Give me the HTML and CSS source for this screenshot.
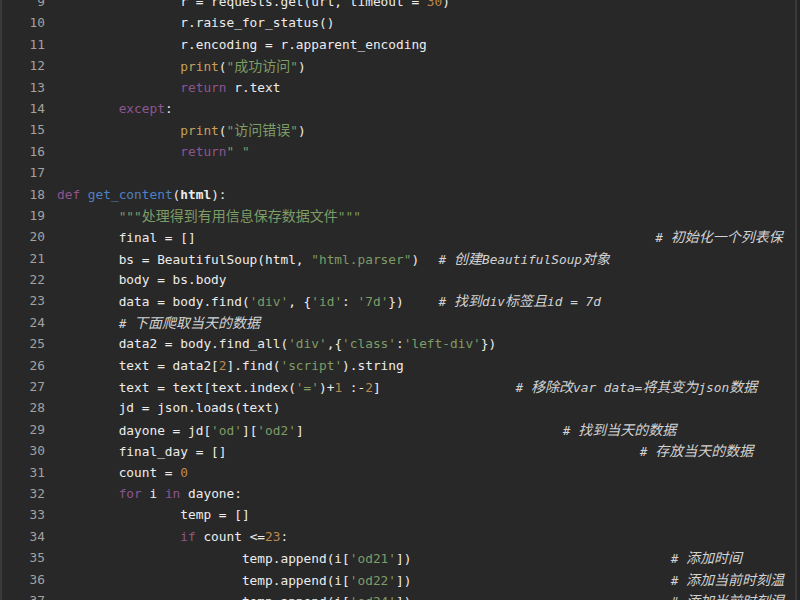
FILE: index.html
```html
<!DOCTYPE html>
<html lang="zh-CN">
<head>
<meta charset="utf-8">
<title>code</title>
<link rel="stylesheet" href="styles.css">
</head>
<body>
<div class="editor">
  <div class="lines">
    <div class="row"><span class="num">9</span><span class="code">                r = requests.get(url, timeout = <span class="n">30</span>)</span></div>
    <div class="row"><span class="num">10</span><span class="code">                r.raise_for_status()</span></div>
    <div class="row"><span class="num">11</span><span class="code">                r.encoding = r.apparent_encoding</span></div>
    <div class="row"><span class="num">12</span><span class="code">                <span class="f">print</span>(<span class="s">"<span class="zh">成功访问</span>"</span>)</span></div>
    <div class="row"><span class="num">13</span><span class="code">                <span class="k">return</span> r.text</span></div>
    <div class="row"><span class="num">14</span><span class="code">        <span class="k">except</span>:</span></div>
    <div class="row"><span class="num">15</span><span class="code">                <span class="f">print</span>(<span class="s">"<span class="zh">访问错误</span>"</span>)</span></div>
    <div class="row"><span class="num">16</span><span class="code">                <span class="k">return</span><span class="s">" "</span></span></div>
    <div class="row"><span class="num">17</span><span class="code"></span></div>
    <div class="row"><span class="num">18</span><span class="code"><span class="k">def</span> <span class="fn">get_content</span>(<span class="b">html</span>):</span></div>
    <div class="row"><span class="num">19</span><span class="code">        <span class="s">"""<span class="zh">处理得到有用信息保存数据文件</span>"""</span></span></div>
    <div class="row"><span class="num">20</span><span class="code"><span class="to77">        final = []</span><span class="c"># <span class="zh">初始化一个列表保</span></span></span></div>
    <div class="row"><span class="num">21</span><span class="code"><span class="to49">        bs = BeautifulSoup(html, <span class="s">"html.parser"</span>)</span><span class="c"># <span class="zh">创建</span>BeautifulSoup<span class="zh">对象</span></span></span></div>
    <div class="row"><span class="num">22</span><span class="code">        body = bs.body</span></div>
    <div class="row"><span class="num">23</span><span class="code"><span class="to49">        data = body.find(<span class="s">'div'</span>, {<span class="s">'id'</span>: <span class="s">'7d'</span>})</span><span class="c"># <span class="zh">找到</span>div<span class="zh">标签且</span>id = 7d</span></span></div>
    <div class="row"><span class="num">24</span><span class="code">        <span class="c"># <span class="zh">下面爬取当天的数据</span></span></span></div>
    <div class="row"><span class="num">25</span><span class="code">        data2 = body.find_all(<span class="s">'div'</span>,{<span class="s">'class'</span>:<span class="s">'left-div'</span>})</span></div>
    <div class="row"><span class="num">26</span><span class="code">        text = data2[<span class="n">2</span>].find(<span class="s">'script'</span>).string</span></div>
    <div class="row"><span class="num">27</span><span class="code"><span class="to59">        text = text[text.index(<span class="s">'='</span>)+<span class="n">1</span> :-<span class="n">2</span>]</span><span class="c"># <span class="zh">移除改</span>var data=<span class="zh">将其变为</span>json<span class="zh">数据</span></span></span></div>
    <div class="row"><span class="num">28</span><span class="code">        jd = json.loads(text)</span></div>
    <div class="row"><span class="num">29</span><span class="code"><span class="to65">        dayone = jd[<span class="s">'od'</span>][<span class="s">'od2'</span>]</span><span class="c"># <span class="zh">找到当天的数据</span></span></span></div>
    <div class="row"><span class="num">30</span><span class="code"><span class="to75">        final_day = []</span><span class="c"># <span class="zh">存放当天的数据</span></span></span></div>
    <div class="row"><span class="num">31</span><span class="code">        count = <span class="n">0</span></span></div>
    <div class="row"><span class="num">32</span><span class="code">        <span class="k">for</span> i <span class="k">in</span> dayone:</span></div>
    <div class="row"><span class="num">33</span><span class="code">                temp = []</span></div>
    <div class="row"><span class="num">34</span><span class="code">                <span class="k">if</span> count &lt;=<span class="n">23</span>:</span></div>
    <div class="row"><span class="num">35</span><span class="code"><span class="to79">                        temp.append(i[<span class="s">'od21'</span>])</span><span class="c"># <span class="zh">添加时间</span></span></span></div>
    <div class="row"><span class="num">36</span><span class="code"><span class="to79">                        temp.append(i[<span class="s">'od22'</span>])</span><span class="c"># <span class="zh">添加当前时刻温</span></span></span></div>
    <div class="row"><span class="num">37</span><span class="code"><span class="to79">                        temp.append(i[<span class="s">'od24'</span>])</span><span class="c"># <span class="zh">添加当前时刻湿</span></span></span></div>
  </div>
</div>
</body>
</html>
```

FILE: styles.css
```css
html, body {
  margin: 0;
  padding: 0;
  background: #252525;
  height: 600px;
  overflow: hidden;
}

.editor {
  width: 793px;
  height: 600px;
  overflow: hidden;
  background: #282828;
  border-left: 2px solid #3a3a3a;
  border-right: 2px solid #3a3a3a;
  font-family: "DejaVu Sans Mono", "Noto Sans CJK SC", monospace;
  font-size: 12.8px;
  color: #ececec;
}

.lines {
  margin-top: -9px;
}

.row {
  display: flex;
  height: 21.4px;
  line-height: 21.4px;
}

.num {
  flex: none;
  width: 43px;
  text-align: right;
  color: #a2a2a2;
}

.code {
  padding-left: 12px;
  white-space: pre;
}

.zh {
  font-family: "Noto Sans CJK SC", sans-serif;
  font-size: 14px;
}

.k { color: #8d5690; }
.f { color: #c9a05a; }
.s { color: #7d9c66; }
.n { color: #be8a4c; }
.fn { color: #4f80c2; }
.b { font-weight: bold; }
.c { color: #d2d2d2; font-style: italic; }

.to49, .to59, .to65, .to75, .to77, .to79 {
  display: inline-block;
}
.to49 { min-width: calc(49ch + 4px); }
.to59 { min-width: calc(59ch + 4px); }
.to65 { min-width: calc(65ch + 5px); }
.to75 { min-width: calc(75ch + 5px); }
.to77 { min-width: calc(77ch + 5px); }
.to79 { min-width: calc(79ch + 5px); }
```
